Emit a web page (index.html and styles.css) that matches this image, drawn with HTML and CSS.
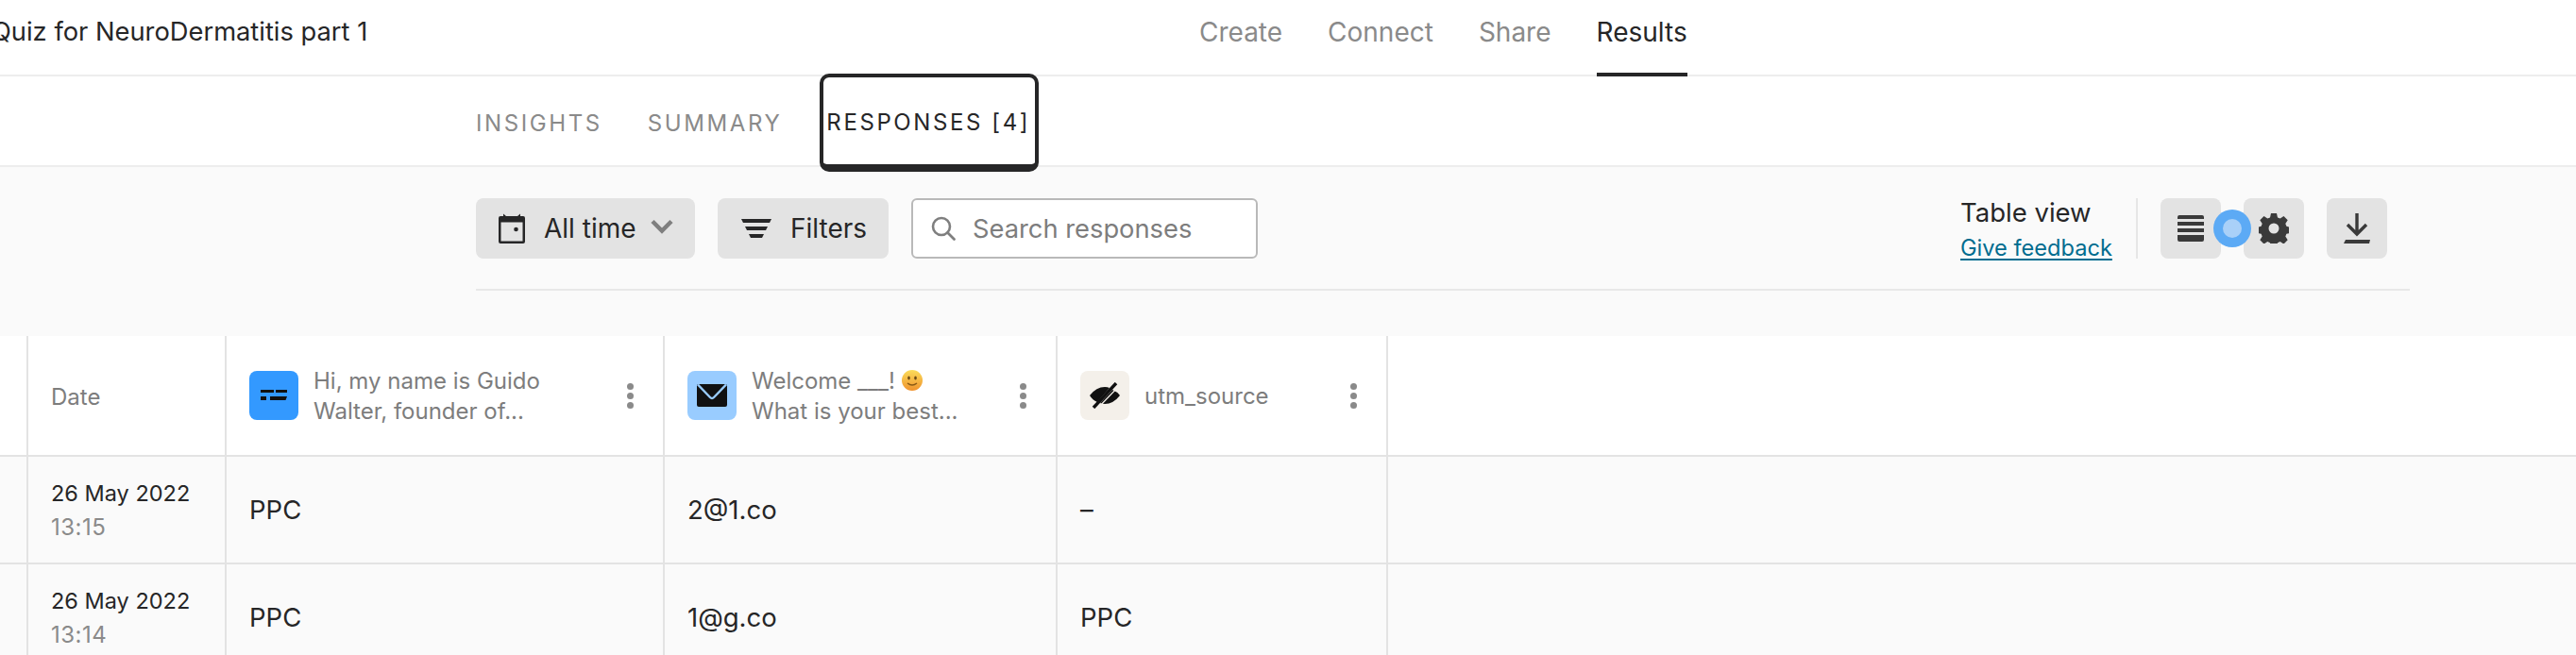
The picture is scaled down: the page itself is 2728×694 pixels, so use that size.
FILE: index.html
```html
<!DOCTYPE html>
<html lang="en">
<head>
<meta charset="utf-8">
<title>Results</title>
<link rel="stylesheet" href="styles.css">
</head>
<body>
<header class="topbar">
  <div class="form-title">Quiz for NeuroDermatitis part 1</div>
  <nav class="main-nav">
    <a class="main-link">Create</a>
    <a class="main-link">Connect</a>
    <a class="main-link">Share</a>
    <a class="main-link is-active">Results</a>
  </nav>
</header>
<div class="tabs">
  <a class="tab">Insights</a>
  <a class="tab">Summary</a>
  <a class="tab tab-focus">Responses [4]</a>
</div>
<section class="toolbar">
  <div class="toolbar-row">
    <button class="btn btn-date">
      <svg class="ic-cal" viewBox="0 0 28 32" width="28" height="32"><path d="M2 3h3V0.5L8 3h12l3-2.500V3h3a2 2 0 0 1 2 2v25a2 2 0 0 1-2 2H2a2 2 0 0 1-2-2V5a2 2 0 0 1 2-2zM2.500 9.500V29.500h23V9.500z" fill="#262627"/><circle cx="18.500" cy="17" r="2.300" fill="#262627"/></svg>
      <span>All time</span>
      <svg class="ic-chev" viewBox="0 0 24 16" width="24" height="16"><path d="M2 2.500l10 10 10-10" fill="none" stroke="#7f7f7f" stroke-width="4.500"/></svg>
    </button>
    <button class="btn btn-filters">
      <svg viewBox="0 0 32 20" width="32" height="20"><path d="M0 0h32l-2 4H2zM4 8h24l-2 4H6zM8 16h16l-2 4H10z" fill="#262627"/></svg>
      <span>Filters</span>
    </button>
    <label class="search">
      <svg viewBox="0 0 28 28" width="28" height="28"><circle cx="12" cy="12" r="9" fill="none" stroke="#7f7f7f" stroke-width="2.600"/><path d="M18.500 18.500l7 7" stroke="#7f7f7f" stroke-width="2.800" stroke-linecap="round"/></svg>
      <span>Search responses</span>
    </label>
    <div class="view-info">
      <div class="view-name">Table view</div>
      <a class="feedback">Give feedback</a>
    </div>
    <div class="icon-group">
      <button class="icon-btn btn-table">
        <svg viewBox="0 0 28 28" width="28" height="28"><path d="M2 0h24a2 2 0 0 1 2 2v2H0V2a2 2 0 0 1 2-2zM0 7h28v4H0zM0 14h28v4H0zM0 21h28v5a2 2 0 0 1-2 2H2a2 2 0 0 1-2-2z" fill="#3a3a3a"/></svg>
        <span class="pulse"><span class="pulse-core"></span></span>
      </button>
      <button class="icon-btn btn-gear">
        <svg viewBox="0 0 32 32" width="32" height="32"><path fill-rule="evenodd" d="M13 0h6l1 4.400 2.700 1.100 3.800-2.400 4.200 4.200-2.400 3.800 1.100 2.700 4.400 1v6l-4.400 1-1.100 2.700 2.400 3.800-4.200 4.200-3.800-2.400-2.700 1.100-1 4.400h-6l-1-4.400-2.700-1.100-3.800 2.400-4.200-4.200 2.400-3.800-1.100-2.700-4.400-1v-6l4.400-1 1.100-2.700-2.400-3.800 4.200-4.200 3.800 2.400 2.700-1.100zM16 10.500a5.500 5.500 0 1 0 0 11 5.500 5.500 0 0 0 0-11z" fill="#3a3a3a"/></svg>
      </button>
      <button class="icon-btn btn-download">
        <svg viewBox="0 0 28 32" width="28" height="32"><path d="M14 0v20M4 12l10 10 10-10" fill="none" stroke="#3a3a3a" stroke-width="3.400"/><path d="M2 28h26l-1 4H0z" fill="#3a3a3a"/></svg>
      </button>
    </div>
  </div>
  <div class="toolbar-rule"></div>
</section>
<section class="table">
  <div class="row row-head">
    <div class="cell cell-edge"></div>
    <div class="cell cell-date head-label">Date</div>
    <div class="cell cell-q1">
      <span class="q-icon q-blue"><svg viewBox="0 0 28 12" width="28" height="12"><path d="M0 0h14v3H0zM16 0h12v3H16zM0 7h6v4H0zM10 7h18l-1.500 4H10z" fill="#111"/></svg></span>
      <span class="q-text">Hi, my name is Guido<br>Walter, founder of...</span>
      <span class="kebab"><i></i><i></i><i></i></span>
    </div>
    <div class="cell cell-q2">
      <span class="q-icon q-sky"><svg viewBox="0 0 32 24" width="32" height="24"><path d="M2 0h28a2 2 0 0 1 2 2v20a2 2 0 0 1-2 2H2a2 2 0 0 1-2-2V2a2 2 0 0 1 2-2z" fill="#111"/><path d="M1 0.500l13 13.500q2 2 4 0l13-13.500" fill="none" stroke="#99ccff" stroke-width="2.400"/></svg></span>
      <span class="q-text">Welcome ___! <svg class="emoji" viewBox="0 0 22 22" width="22" height="22"><defs><linearGradient id="eg" x1="0" y1="0" x2="0" y2="1"><stop offset="0" stop-color="#fbdc5a"/><stop offset="1" stop-color="#f0932e"/></linearGradient></defs><circle cx="11" cy="11" r="11" fill="url(#eg)"/><ellipse cx="7.500" cy="8.500" rx="1.300" ry="2" fill="#6b4a16"/><ellipse cx="14.500" cy="8.500" rx="1.300" ry="2" fill="#6b4a16"/><path d="M6 14q5 4 10 0" fill="none" stroke="#8a5a16" stroke-width="1.400"/></svg><br>What is your best...</span>
      <span class="kebab"><i></i><i></i><i></i></span>
    </div>
    <div class="cell cell-q3">
      <span class="q-icon q-sand"><svg viewBox="0 0 32 28" width="32" height="28"><path d="M0 14Q7 5 16 5q3 0 5 1L8 21q-5-2-8-7zM32 14q-7 9-16 9-2 0-5-1L24 8q5 2 8 6z" fill="#111"/><path d="M4 27L28 1" stroke="#111" stroke-width="3.400" /><path d="M7 26L30 2" stroke="#f4f0ea" stroke-width="1.200" transform="translate(1.500 1.500)"/></svg></span>
      <span class="q-text">utm_source</span>
      <span class="kebab"><i></i><i></i><i></i></span>
    </div>
    <div class="cell cell-fill"></div>
  </div>
  <div class="row">
    <div class="cell cell-edge"></div>
    <div class="cell cell-date"><div class="d-day">26 May 2022</div><div class="d-time">13:15</div></div>
    <div class="cell cell-q1 value">PPC</div>
    <div class="cell cell-q2 value">2@1.co</div>
    <div class="cell cell-q3 value">–</div>
    <div class="cell cell-fill"></div>
  </div>
  <div class="row">
    <div class="cell cell-edge"></div>
    <div class="cell cell-date"><div class="d-day">26 May 2022</div><div class="d-time">13:14</div></div>
    <div class="cell cell-q1 value">PPC</div>
    <div class="cell cell-q2 value">1@g.co</div>
    <div class="cell cell-q3 value">PPC</div>
    <div class="cell cell-fill"></div>
  </div>
</section>
</body>
</html>
```

FILE: styles.css
```css
* { box-sizing: border-box; }
html, body { margin: 0; height: 694px; overflow: hidden; }
body { background: #fafafa; font-family: Inter, "Liberation Sans", sans-serif; color: #262627; width: 2728px; }

.topbar { height: 81px; background: #fff; border-bottom: 2px solid #ededed; display: flex; align-items: stretch; }
.form-title { font-size: 27.300px; line-height: 68px; margin-left: -9px; width: 1279px; white-space: nowrap; }
.main-nav { display: flex; gap: 48px; }
.main-link { font-size: 28px; line-height: 68px; color: #8a8a8a; height: 81px; }
.main-link.is-active { color: #262627; border-bottom: 4px solid #262627; }

.tabs { height: 96px; background: #fff; border-bottom: 2px solid #ededed; padding-left: 504px; display: flex; align-items: flex-start; gap: 48px; }
.tab { font-size: 24px; letter-spacing: 2.6px; text-transform: uppercase; color: #8a8a8a; line-height: 100px; }
.tab-focus { color: #262627; margin: -3px 0 0 -8px; height: 104px; width: 232px; border: 4px solid #262627; border-bottom-width: 8px; border-radius: 10px; padding-left: 3px; line-height: 96px; white-space: nowrap; position: relative; background: #fff; }

.toolbar { height: 179px; padding: 33px 176px 0 504px; }
.toolbar-row { display: flex; height: 64px; align-items: stretch; }
.btn { border: 0; background: #e3e3e3; border-radius: 8px; font: inherit; font-size: 28px; color: #262627; display: flex; align-items: center; padding: 0; height: 64px; }
.btn-date { width: 232px; padding-left: 24px; gap: 20px; }
.btn-date .ic-chev { margin-left: -5px; margin-top: -4px; }
.btn-filters { width: 181px; margin-left: 24px; padding-left: 25px; gap: 20px; }
.search { width: 367px; margin-left: 24px; background: #fff; border: 2px solid #b9b9b9; border-radius: 6px; display: flex; align-items: center; padding-left: 18px; gap: 17px; font-size: 27.300px; color: #7d7d7d; }
.view-info { margin-left: auto; width: 188px; border-right: 2px solid #e6e6e6; height: 64px; }
.view-name { font-size: 27.500px; line-height: 34px; margin-top: -2px; }
.feedback { display: inline-block; font-size: 23.600px; line-height: 28px; color: #006c8f; text-decoration: underline; text-underline-offset: 3px; margin-top: 7px; }
.icon-group { display: flex; margin-left: 24px; margin-right: 24px; gap: 24px; }
.icon-btn { width: 64px; height: 64px; border: 0; border-radius: 8px; background: #e3e3e3; padding: 0; display: flex; align-items: center; justify-content: center; position: relative; }
.pulse { position: absolute; left: 56px; top: 12px; width: 40px; height: 40px; border-radius: 50%; background: #5caaf5; display: flex; align-items: center; justify-content: center; z-index: 1; }
.pulse-core { width: 20px; height: 20px; border-radius: 50%; background: #a9d0f8; }
.toolbar-rule { height: 2px; background: #e8e8e8; margin-top: 32px; }

.table { font-size: 24px; }
.row { display: grid; grid-template-columns: 30px 210px 464px 416px 350px 1fr; height: 114px; border-bottom: 2px solid #e3e3e3; }
.row-head { height: 128px; background: #fff; }
.cell { border-right: 2px solid #e3e3e3; display: flex; align-items: center; padding-left: 24px; }
.cell-edge { padding: 0; margin-right: 0; }
.cell-fill { border-right: 0; }
.cell-date { flex-direction: column; align-items: flex-start; justify-content: center; padding-top: 1px; }
.head-label { color: #7d7d7d; font-size: 24px; padding-top: 3px; }
.d-day { font-size: 23.500px; line-height: 36px; }
.d-time { font-size: 24px; line-height: 36px; color: #8a8a8a; letter-spacing: .5px; }
.value { font-size: 27.500px; }
.q-icon { width: 52px; height: 52px; border-radius: 8px; flex: none; display: flex; align-items: center; justify-content: center; }
.q-blue { background: #3399ff; }
.q-sky { background: #99ccff; }
.q-sand { background: #f4f0ea; }
.q-text { font-size: 24px; line-height: 32px; color: #7d7d7d; margin: 2px 0 0 16px; white-space: nowrap; }
.emoji { vertical-align: -2px; }
.kebab { margin-left: auto; margin-right: 31px; display: flex; flex-direction: column; gap: 3px; }
.kebab i { width: 7px; height: 7px; border-radius: 50%; background: #8a8a8a; display: block; }
```
